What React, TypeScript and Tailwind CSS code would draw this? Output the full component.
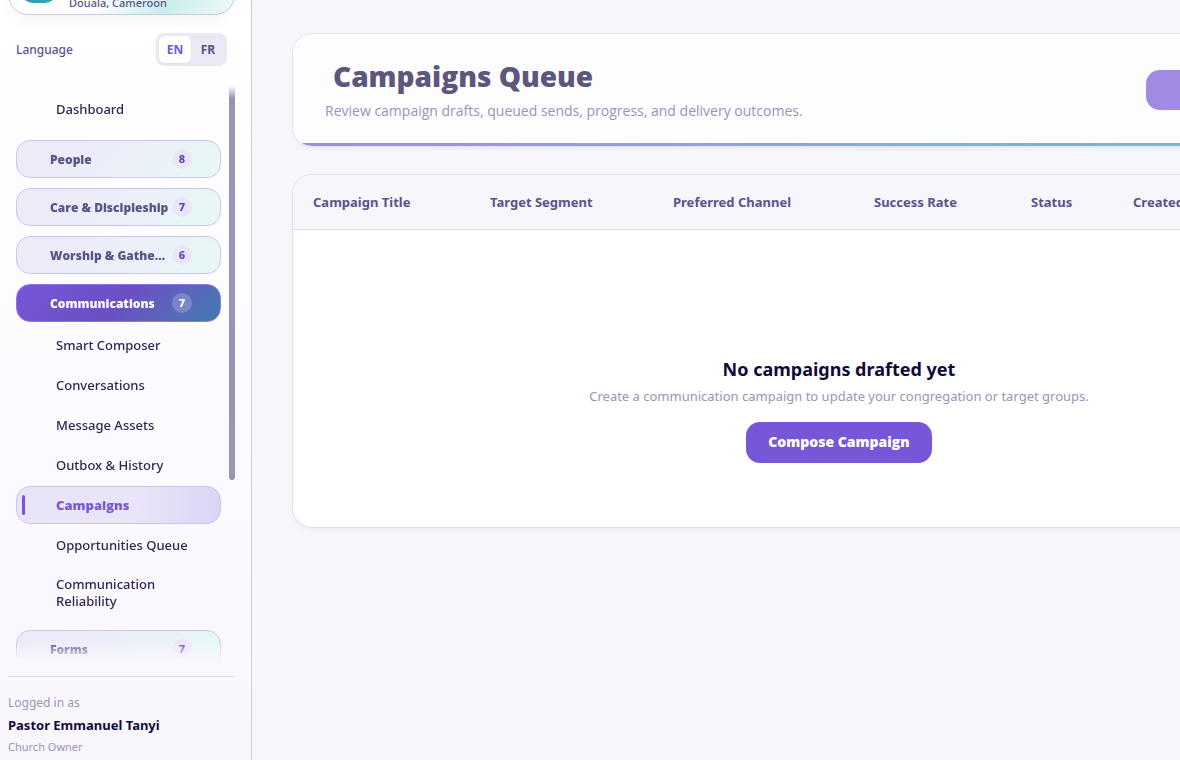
import { useState } from 'react';
import { clsx } from 'clsx';

interface NavGroup {
  label: string;
  count: number;
  items?: string[];
}

const groups: NavGroup[] = [
  { label: 'People', count: 8 },
  { label: 'Care & Discipleship', count: 7 },
  { label: 'Worship & Gatherings', count: 6 },
  {
    label: 'Communications',
    count: 7,
    items: [
      'Smart Composer',
      'Conversations',
      'Message Assets',
      'Outbox & History',
      'Campaigns',
      'Opportunities Queue',
      'Communication Reliability',
    ],
  },
  { label: 'Forms', count: 7 },
];

const columns = [
  { label: 'Campaign Title', width: 'w-[177px]' },
  { label: 'Target Segment', width: 'w-[183px]' },
  { label: 'Preferred Channel', width: 'w-[201px]' },
  { label: 'Success Rate', width: 'w-[157px]' },
  { label: 'Status', width: 'w-[102px]' },
  { label: 'Created', width: 'w-[136px]' },
  { label: 'Actions', width: 'w-[136px]' },
];

function LanguageSwitch() {
  const [language, setLanguage] = useState('EN');

  return (
    <div className="mt-[18px] flex shrink-0 items-center justify-between px-2">
      <span className="text-xs font-medium text-[#5a5389]">Language</span>
      <div className="flex gap-px rounded-lg bg-[#ebe9f3] p-[3px]" role="group" aria-label="Language">
        {['EN', 'FR'].map((code) => (
          <button
            key={code}
            type="button"
            onClick={() => setLanguage(code)}
            className={clsx(
              'h-[27px] w-8 rounded-md text-xs font-bold',
              language === code ? 'bg-white text-[#7856d8] shadow-xs' : 'text-[#5a5389]'
            )}
          >
            {code}
          </button>
        ))}
      </div>
    </div>
  );
}

function NavLink({ label, active = false }: { label: string; active?: boolean }) {
  return (
    <a
      href="#"
      className={clsx(
        'relative flex min-h-[38px] items-center rounded-[14px] border pr-6 pl-[39px] text-[13px] leading-[17px]',
        active
          ? "border-[#cdc3ec] bg-linear-to-r from-[#e9e4f7] from-60% to-[#dcd4f4] font-['Open_Sans','Noto_Sans',sans-serif] font-extrabold text-[#7856d8]"
          : 'border-transparent font-medium text-[#2d2654]',
        label.length > 20 && 'py-[9px]'
      )}
    >
      {active && <span className="absolute top-2 left-[5px] h-5 w-[3px] rounded-full bg-[#7856d8]" />}
      {label}
    </a>
  );
}

function NavSection({ group }: { group: NavGroup }) {
  const open = Boolean(group.items);

  return (
    <div>
      <button
        type="button"
        aria-expanded={open}
        className={clsx(
          'flex h-[38px] w-full items-center rounded-[14px] border pr-7 pl-[33px] text-left',
          open
            ? 'border-[#8f74e0] bg-linear-135 from-[#7856d8] via-[#6a4fc4] to-[#3f7ab0] text-white'
            : 'border-[#cdc5ea] bg-linear-135 from-[#ede9f9] via-[#ebeff8] to-[#e7f9f6] text-[#5a5389]'
        )}
      >
        <span className="mr-0.5 flex-1 truncate pt-0.5 font-['Open_Sans','Noto_Sans',sans-serif] text-xs font-extrabold">
          {group.label}
        </span>
        <span
          className={clsx(
            'flex size-5 shrink-0 items-center justify-center rounded-full text-[11px] font-extrabold',
            open ? 'bg-white/20 text-white' : 'bg-[#ebe5f9] text-[#6243bd]'
          )}
        >
          {group.count}
        </span>
      </button>
      {group.items && (
        <div className="mt-1 flex flex-col gap-0.5">
          {group.items.map((item) => (
            <NavLink key={item} label={item} active={item === 'Campaigns'} />
          ))}
        </div>
      )}
    </div>
  );
}

function Sidebar() {
  return (
    <aside className="flex h-screen w-[252px] shrink-0 flex-col border-r border-[#d0ccdd] bg-linear-to-b from-white via-[#fbfaff] via-65% to-[#f9f5fc] pr-4 pb-[3px] pl-2">
      {/* Church card */}
      <div className="-mt-14 flex h-[71px] shrink-0 items-end rounded-[20px] border border-[#cdc9de] bg-linear-135 from-white from-50% via-[#c8edeb] via-75% to-[#f3fafa] pb-[3px] pl-3 shadow-lg shadow-[#2d2654]/3">
        <span className="mb-2 size-9 rounded-xl bg-linear-to-r from-[#4388bd] to-[#25b2ad]" />
        <span className="ml-3 text-[11px] leading-4 font-medium text-[#5a5389]">Douala, Cameroon</span>
      </div>

      <LanguageSwitch />

      <div className="relative mt-5 min-h-0 flex-1 overflow-hidden mask-t-from-[calc(100%-12px)] mask-b-from-[calc(100%-18px)]">
        <nav className="flex flex-col pt-1 pr-3.5 pl-2">
          <NavLink label="Dashboard" />
          <div className="mt-3 flex flex-col gap-2.5">
            {groups.map((group) => (
              <NavSection key={group.label} group={group} />
            ))}
          </div>
        </nav>
        <div className="absolute top-0 right-0 h-[394px] w-1.5 rounded-full bg-[#9a95b5]" />
      </div>

      {/* Signed-in user */}
      <div className="mt-4 shrink-0 border-t border-[#dfdbea] pt-4">
        <p className="text-xs leading-5 text-[#9a95b5]">Logged in as</p>
        <p className="text-[13px] leading-6 font-bold text-[#100a3c]">Pastor Emmanuel Tanyi</p>
        <p className="text-[11px] leading-5 text-[#9a95b5]">Church Owner</p>
      </div>
    </aside>
  );
}

function PageHeader() {
  return (
    <header className="relative flex items-center justify-between overflow-hidden rounded-[20px] border border-[#e6e4ee] bg-[#fdfdfe] px-8 py-6 shadow-md shadow-[#2d2654]/3">
      <div>
        <h1 className="pl-2 font-['Open_Sans','Noto_Sans',sans-serif] text-[28px] leading-9 font-extrabold text-[#5d567f]">
          Campaigns Queue
        </h1>
        <p className="mt-1.5 font-['Open_Sans','Noto_Sans',sans-serif] text-sm leading-[22px] text-[#9a92bb]">
          Review campaign drafts, queued sends, progress, and delivery outcomes.
        </p>
      </div>
      <button type="button" className="h-10 w-[207px] rounded-[14px] bg-[#a189e4] text-sm font-bold text-white">
        Compose
      </button>
      <div className="absolute inset-x-0 bottom-0 h-[3px] bg-linear-to-r from-[#a189e4] to-[#5fc8c5]" />
    </header>
  );
}

function CampaignTable() {
  return (
    <section className="overflow-hidden rounded-[20px] border border-[#e2e0ea] bg-white shadow-md shadow-[#2d2654]/3">
      <table className="w-full table-fixed border-collapse">
        <thead>
          <tr className="h-[54px] border-b border-[#dfdde9] bg-[#f7f6fb]">
            {columns.map((column) => (
              <th
                key={column.label}
                scope="col"
                className={clsx('px-5 pt-0.5 text-left text-[13px] font-bold whitespace-nowrap text-[#5a5389]', column.width)}
              >
                {column.label}
              </th>
            ))}
          </tr>
        </thead>
        <tbody>
          <tr>
            <td colSpan={columns.length} className="pt-31 pb-16 text-center">
              <h2 className="text-lg leading-[30px] font-bold text-[#100a3c]">No campaigns drafted yet</h2>
              <p className="text-[13px] leading-6 text-[#9a95b5]">
                Create a communication campaign to update your congregation or target groups.
              </p>
              <button
                type="button"
                className="mt-3.5 h-[41px] rounded-[14px] bg-[#7856d8] px-[22px] font-['Open_Sans','Noto_Sans',sans-serif] text-sm font-extrabold text-white"
              >
                Compose Campaign
              </button>
            </td>
          </tr>
        </tbody>
      </table>
    </section>
  );
}

export default function App() {
  return (
    <div className="flex h-screen overflow-hidden bg-[#f7f6fb] font-['Noto_Sans','Open_Sans',sans-serif]">
      <Sidebar />
      <main className="flex min-w-[1174px] flex-1 flex-col gap-[27px] px-10 pt-[33px]">
        <PageHeader />
        <CampaignTable />
      </main>
    </div>
  );
}
